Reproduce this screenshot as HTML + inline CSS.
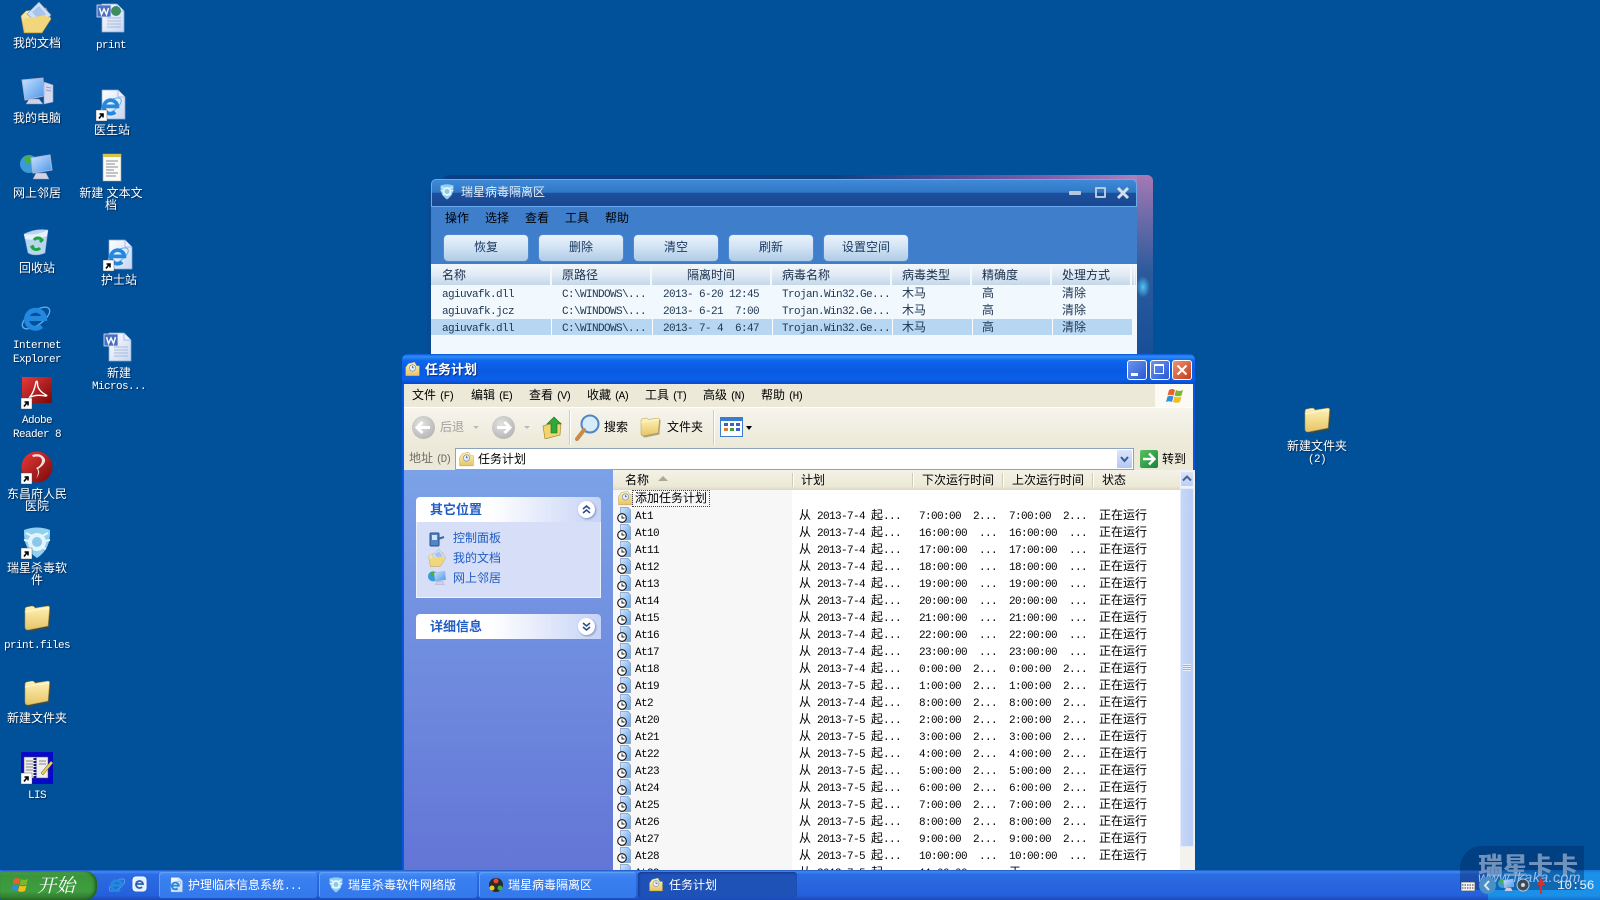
<!DOCTYPE html>
<html lang="zh"><head><meta charset="utf-8"><title>任务计划</title>
<style>
html,body{margin:0;padding:0;width:1600px;height:900px;overflow:hidden;background:#00509a}
body{position:relative;font-family:"Liberation Sans","WenQuanYi Zen Hei","Noto Sans CJK SC",sans-serif;font-size:12px;line-height:16px;color:#000}
div,span,svg{position:absolute}
tt{position:static;font-family:"Liberation Mono",monospace;font-size:11px;letter-spacing:-.6px}
.t{white-space:nowrap}
.lb{width:90px;text-align:center;color:#fff;line-height:12px;text-shadow:1px 1px 1px #00264f;white-space:nowrap}
.ic{width:32px;height:32px;overflow:visible}
.btn{top:235px;width:84px;height:26px;border-radius:4px;background:linear-gradient(#eaf3fb,#d3e4f4 45%,#afcbe6);box-shadow:0 0 1px #9cc2ea;text-align:center;line-height:25px;color:#16375f}
.hd{top:264px;height:21px;line-height:22px;background:linear-gradient(#f3f7fb,#e1ebf5 50%,#c4d7ea);border-right:2px solid #f3f8fd;color:#1a2f4c}
.rw{position:absolute;left:431px;width:701px;height:16px;line-height:16px;color:#1d3550}
.rw span{white-space:nowrap;top:0}
.menu span{top:0;white-space:nowrap}
.menu tt,.pk tt{margin-left:3px;letter-spacing:-2px}
.r{left:0;width:567px;height:16px;white-space:nowrap}
.r svg{left:4px;top:0;width:16px;height:18px}
.r span{top:0}
.a{left:22px}.b{left:186px}.g{margin:0 6px}.n{left:306px}.d{left:360px}.e{left:366px}.l{left:396px}.f{left:450px}.h{left:456px}.z{left:486px}
.tb{top:872px;height:26px;border-radius:3px;background:linear-gradient(#4a8ef5,#3a80f0 20%,#3479ec);color:#fff;line-height:26px;white-space:nowrap;box-shadow:inset 1px 1px 0 #5f9ff8}
.sep{width:1px;background:#cfccb8;box-shadow:1px 0 0 #fff}
.task{left:453px;color:#215dc6;white-space:nowrap}
.grp{left:416px;width:185px;border-radius:4px 4px 0 0;background:linear-gradient(90deg,#fff,#fff 40%,#c6d3f7);height:25px}
.gt{left:14px;top:5px;font-weight:bold;font-size:13px;color:#215dc6;white-space:nowrap}
.chev{left:162px;top:4px;width:17px;height:17px;border-radius:50%;background:#fff;box-shadow:1px 1px 2px #7f8fc0}
</style></head><body>

<svg width="0" height="0" style="left:0;top:0">
<defs>
<linearGradient id="gf" x1="0" y1="0" x2="0" y2="1"><stop offset="0" stop-color="#fff3b8"/><stop offset="1" stop-color="#e6c465"/></linearGradient>
<linearGradient id="gs" x1="0" y1="0" x2="1" y2="1"><stop offset="0" stop-color="#c8e4ff"/><stop offset="1" stop-color="#4c94e8"/></linearGradient>
<linearGradient id="gp" x1="0" y1="0" x2="1" y2="1"><stop offset="0" stop-color="#fff"/><stop offset="1" stop-color="#c6d6f2"/></linearGradient>
<linearGradient id="gr" x1="0" y1="0" x2="1" y2="1"><stop offset="0" stop-color="#e83a3a"/><stop offset="1" stop-color="#7a0808"/></linearGradient>
<g id="folder"><path d="M5 9Q5 6 7 6L12 5Q14 5 15 7L27 5Q29 5 28.500 8L27 25 8 29Q5 29 5 26Z" fill="#5c4a18" opacity=".45" transform="translate(1.500 1)"/><path d="M4 8Q4 5 6 5L11 4Q13 4 14 6L27 4Q29 4 28.500 7L27 24 7 28Q4 28 4 25Z" fill="url(#gf)" stroke="#b0913f" stroke-width=".6"/><path d="M4 10 14 8 28 6" fill="none" stroke="#fff8d0" stroke-width="1"/></g>
<g id="docs"><path d="M1 14 6 9 26 6 31 17 22 31 4 31Z" fill="url(#gf)" stroke="#b0913f" stroke-width=".6"/><path d="M7 12 19 0 31 13 20 23Z" fill="#cfe0f8" stroke="#7f9bc8" stroke-width=".6"/><path d="M12 10 19 4 26 12 19 18Z" fill="#a8c4ea"/><path d="M4 17 25 13 30 17 22 30 5 30Z" fill="#f2d67c"/></g>
<g id="pc"><path d="M2 3 23 1 24 19 5 23Z" fill="url(#gs)" stroke="#aab8d8"/><path d="M9 22h10l4 5H6Z" fill="#d2d2e6" stroke="#8888a8" stroke-width=".5"/><path d="M24 5 33 8V25L24 27Z" fill="#d4daee" stroke="#8d9ec8" stroke-width=".6"/><path d="M26 10 31 11M26 13 31 14" stroke="#8d9ec8"/></g>
<g id="net"><circle cx="9" cy="13" r="9" fill="#3c9ad8"/><path d="M4 7q5-4 9 0l-3 5-4 1Z" fill="#4cae3c"/><path d="M11 7 30 4 32 19 13 22Z" fill="url(#gs)" stroke="#aab8d8"/><path d="M16 22h10l3 6H13Z" fill="#d2d2e6" stroke="#9090ac" stroke-width=".5"/></g>
<g id="bin"><path d="M4 8Q16 2 28 4L25 27Q15 31 8 27Z" fill="#b8d6f0" stroke="#7ea2cc" stroke-width=".6"/><path d="M4 8Q16 10 28 4L27 10Q15 15 5 13Z" fill="#e6f2fb"/><path d="M14 14a5 5 0 0 1 8 0l-2 2M20 22a5 5 0 0 1-8-1l2-1" fill="none" stroke="#1fa63c" stroke-width="3"/></g>
<g id="ie"><ellipse cx="16" cy="16" rx="16" ry="7" transform="rotate(-35 16 16)" fill="none" stroke="#63b0ea" stroke-width="1.300"/><path d="M7 16.500h17.500a9 9 0 1 0-3 7.500" fill="none" stroke="#2388de" stroke-width="5"/></g>
<g id="sc"><rect x="0" y="21" width="11" height="11" fill="#fff" stroke="#444" stroke-width=".4"/><path d="M3 29.500l3.500-4.500M3.500 25h3.500v3.500" fill="none" stroke="#000" stroke-width="1.600"/></g>
<g id="ad"><rect x="1" y="0" width="30" height="26" fill="url(#gr)"/><path d="M8 21Q13 16 15 5Q16 3 16.500 6Q16 13 25 18Q27 19 24 19Q14 17 8 21Z" fill="none" stroke="#fff" stroke-width="1.400"/></g>
<g id="hos"><circle cx="16" cy="15" r="15.500" fill="url(#gr)"/><path d="M12 5Q21 3 21 9Q20 14 15 16Q19 19 15 27Q20 20 17 17Q25 12 24 7Q20 0 11 3Z" fill="#f4dede"/></g>
<g id="lion"><path d="M3 3Q16-2 29 3Q30 22 16 31Q2 22 3 3Z" fill="#8fd0f0"/><circle cx="16" cy="15" r="9" fill="#e2f4fc"/><circle cx="16" cy="15" r="5" fill="#8cc8ea"/><path d="M5 6 11 9M27 6 21 9M3 13 8 14M29 13 24 14M7 22 11 20M25 22 21 20" stroke="#e8f6fd" stroke-width="2"/></g>
<g id="lis"><rect width="32" height="32" fill="#0808c8"/><path d="M3 5H15V26H3ZM15 5H27V26H15Z" fill="#eee" stroke="#555" stroke-width=".5"/><path d="M14 3v25" stroke="#111680" stroke-width="3" stroke-dasharray="2 1"/><path d="M5 9h7M5 12h7M5 15h7M5 18h7M18 9h7M18 12h7" stroke="#888"/><path d="M20 21 30 9 32 11 22 23Z" fill="#f0d040" stroke="#444" stroke-width=".5"/></g>
<g id="word"><path d="M6 2H21L28 9V30H6Z" fill="url(#gp)" stroke="#8ea8d0" stroke-width=".7"/><path d="M21 2V9H28" fill="#eef" stroke="#8ea8d0" stroke-width=".7"/><path d="M11 16h14M11 19h14M11 22h14M11 25h14" stroke="#a6bbdc"/><rect x="1" y="3" width="14" height="12" fill="#4a6ec0" stroke="#dfe8fa" stroke-width=".8"/><path d="M3.500 6 5.500 12.500 8 7 10.500 12.500 12.500 6" fill="none" stroke="#fff" stroke-width="1.400"/></g>
<g id="wordw"><use href="#word"/><circle cx="20" cy="9" r="5" fill="#3c8e60"/></g>
<g id="iedoc"><path d="M6 1H22L29 8V30H6Z" fill="url(#gp)" stroke="#8ea8d0" stroke-width=".7"/><path d="M22 1V8H29" fill="#eef" stroke="#8ea8d0" stroke-width=".7"/><g transform="translate(3 5) scale(.75)"><use href="#ie"/></g></g>
<g id="note"><path d="M8 3H26V30H8Z" fill="#fbfbf3" stroke="#9aa" stroke-width=".6"/><path d="M8 3H26V6H8Z" fill="#d6c44c"/><path d="M11 10h12M11 13h9M11 16h12M11 19h8M11 22h12M11 25h10" stroke="#668" stroke-width=".8"/></g>
<g id="task"><path d="M3 12 8 5 20 2 24 9H29V28H3Z" fill="url(#gf)" stroke="#a58a3a" stroke-width=".7"/><circle cx="16" cy="13" r="6" fill="#e4eefb" stroke="#5578ae"/><path d="M16 9v4h3" stroke="#223" fill="none"/></g>
<g id="rowi"><path d="M3.500.5H11L13.500 3V15.500H3.500Z" fill="url(#gs)" stroke="#6d87b4" stroke-width=".7" opacity=".85"/><circle cx="5" cy="11" r="4.300" fill="#fff" stroke="#111" stroke-width="1.100"/><path d="M5 8.500V11H7.500" stroke="#111" fill="none" stroke-width=".9"/></g>
</defs>
</svg>

<!-- desktop icons -->
<svg class="ic" viewBox="0 0 32 32" style="left:20px;top:2px"><use href="#docs"/></svg>
<div class="lb t" style="left:-8px;top:37px">我的文档</div>
<svg class="ic" viewBox="0 0 32 32" style="left:20px;top:77px"><use href="#pc"/></svg>
<div class="lb t" style="left:-8px;top:112px">我的电脑</div>
<svg class="ic" viewBox="0 0 32 32" style="left:20px;top:151px"><use href="#net"/></svg>
<div class="lb t" style="left:-8px;top:187px">网上邻居</div>
<svg class="ic" viewBox="0 0 32 32" style="left:20px;top:226px"><use href="#bin"/></svg>
<div class="lb t" style="left:-8px;top:262px">回收站</div>
<svg class="ic" viewBox="0 0 32 32" style="left:20px;top:302px"><use href="#ie"/></svg>
<div class="lb t" style="left:-8px;top:338px"><tt>Internet<br>Explorer</tt></div>
<svg class="ic" viewBox="0 0 32 32" style="left:21px;top:377px"><use href="#ad"/><use href="#sc"/></svg>
<div class="lb t" style="left:-8px;top:413px"><tt>Adobe<br>Reader 8</tt></div>
<svg class="ic" viewBox="0 0 32 32" style="left:21px;top:452px"><use href="#hos"/><use href="#sc"/></svg>
<div class="lb t" style="left:-8px;top:488px">东昌府人民<br>医院</div>
<svg class="ic" viewBox="0 0 32 32" style="left:21px;top:527px"><use href="#lion"/><use href="#sc"/></svg>
<div class="lb t" style="left:-8px;top:562px">瑞星杀毒软<br>件</div>
<svg class="ic" viewBox="0 0 32 32" style="left:21px;top:602px"><use href="#folder"/></svg>
<div class="lb t" style="left:-8px;top:638px"><tt>print.files</tt></div>
<svg class="ic" viewBox="0 0 32 32" style="left:21px;top:677px"><use href="#folder"/></svg>
<div class="lb t" style="left:-8px;top:712px">新建文件夹</div>
<svg class="ic" viewBox="0 0 32 32" style="left:21px;top:752px"><use href="#lis"/><use href="#sc"/></svg>
<div class="lb t" style="left:-8px;top:788px"><tt>LIS</tt></div>

<svg class="ic" viewBox="0 0 32 32" style="left:96px;top:2px"><use href="#wordw"/></svg>
<div class="lb t" style="left:66px;top:38px"><tt>print</tt></div>
<svg class="ic" viewBox="0 0 32 32" style="left:96px;top:89px"><use href="#iedoc"/><use href="#sc"/></svg>
<div class="lb t" style="left:67px;top:124px">医生站</div>
<svg class="ic" viewBox="0 0 32 32" style="left:95px;top:151px"><use href="#note"/></svg>
<div class="lb t" style="left:66px;top:187px">新建 文本文<br>档</div>
<svg class="ic" viewBox="0 0 32 32" style="left:103px;top:239px"><use href="#iedoc"/><use href="#sc"/></svg>
<div class="lb t" style="left:74px;top:274px">护士站</div>
<svg class="ic" viewBox="0 0 32 32" style="left:103px;top:331px"><use href="#word"/></svg>
<div class="lb t" style="left:74px;top:367px">新建<br><tt>Micros...</tt></div>

<svg class="ic" viewBox="0 0 32 32" style="left:1301px;top:404px"><use href="#folder"/></svg>
<div class="lb t" style="left:1272px;top:440px">新建文件夹<br><tt>(2)</tt></div>

<!-- Rising quarantine window -->
<div style="left:443px;top:175px;width:710px;height:180px;border-radius:6px 6px 0 0;background:linear-gradient(90deg,#0b3f85,#0d3f85 55%,#7e5ea8 85%,#b487c0)"></div>
<div style="left:427px;top:190px;width:6px;height:165px;background:#0a4a92"></div>
<div style="left:1137px;top:175px;width:16px;height:180px;border-radius:0 6px 0 0;background:linear-gradient(#a679b4,#6a6aa8 25%,#2a5a9c 55%,#174f98)"></div>
<div style="left:1136px;top:276px;width:14px;height:22px;border-radius:50%;background:radial-gradient(#4fc4f5,rgba(60,150,230,0) 70%)"></div>
<div style="left:431px;top:179px;width:706px;height:28px;box-sizing:border-box;border:1px solid #6aaaf0;border-radius:5px 5px 0 0;background:linear-gradient(#3f8ad8,#2f78c6 48%,#1c4f9c 50%,#1a4791)"></div>
<svg viewBox="0 0 32 32" style="left:439px;top:184px;width:16px;height:16px"><use href="#lion"/></svg>
<div class="t" style="left:461px;top:184px;color:#e4eef8">瑞星病毒隔离区</div>
<div style="left:1069px;top:191px;width:12px;height:4px;background:#b8c8dc;border-radius:1px"></div>
<div style="left:1095px;top:187px;width:7px;height:7px;border:2px solid #b8c8dc;border-radius:1px"></div>
<svg width="14" height="14" viewBox="0 0 14 14" style="left:1116px;top:186px"><path d="M2 2 12 12M12 2 2 12" stroke="#d3dfeb" stroke-width="3"/></svg>

<div style="left:431px;top:207px;width:706px;height:57px;background:#3f7ecb"></div>
<div class="menu" style="left:0;top:210px">
<span style="left:445px">操作</span><span style="left:485px">选择</span><span style="left:525px">查看</span><span style="left:565px">工具</span><span style="left:605px">帮助</span>
</div>
<div class="btn" style="left:444px">恢复</div>
<div class="btn" style="left:539px">删除</div>
<div class="btn" style="left:634px">清空</div>
<div class="btn" style="left:729px">刷新</div>
<div class="btn" style="left:824px">设置空间</div>

<div style="left:431px;top:264px;width:706px;height:90px;background:#f2f9fe"></div>
<div class="hd" style="left:431px;width:119px"><span style="left:11px">名称</span></div>
<div class="hd" style="left:552px;width:98px"><span style="left:10px">原路径</span></div>
<div class="hd" style="left:652px;width:118px;text-align:center">隔离时间</div>
<div class="hd" style="left:772px;width:118px"><span style="left:10px">病毒名称</span></div>
<div class="hd" style="left:892px;width:78px"><span style="left:10px">病毒类型</span></div>
<div class="hd" style="left:972px;width:78px"><span style="left:10px">精确度</span></div>
<div class="hd" style="left:1052px;width:78px"><span style="left:10px">处理方式</span></div>
<div class="hd" style="left:1132px;width:2px;border-right:0"></div>
<div class="hd" style="left:1135px;width:1px;border-right:0"></div>

<div class="rw" style="top:285px"><span style="left:11px"><tt>agiuvafk.dll</tt></span><span style="left:131px"><tt>C:\WINDOWS\...</tt></span><span style="left:232px"><tt>2013- 6-20 12:45</tt></span><span style="left:351px"><tt>Trojan.Win32.Ge...</tt></span><span style="left:471px">木马</span><span style="left:551px">高</span><span style="left:631px">清除</span></div>
<div class="rw" style="top:302px"><span style="left:11px"><tt>agiuvafk.jcz</tt></span><span style="left:131px"><tt>C:\WINDOWS\...</tt></span><span style="left:232px"><tt>2013- 6-21&nbsp; 7:00</tt></span><span style="left:351px"><tt>Trojan.Win32.Ge...</tt></span><span style="left:471px">木马</span><span style="left:551px">高</span><span style="left:631px">清除</span></div>
<div class="rw" style="top:319px;background:linear-gradient(90deg,#b6d6f2 120px,#fff 120px,#fff 121px,#b6d6f2 121px,#b6d6f2 221px,#fff 221px,#fff 222px,#b6d6f2 222px,#b6d6f2 341px,#fff 341px,#fff 342px,#b6d6f2 342px,#b6d6f2 461px,#fff 461px,#fff 462px,#b6d6f2 462px,#b6d6f2 541px,#fff 541px,#fff 542px,#b6d6f2 542px,#b6d6f2 621px,#fff 621px,#fff 622px,#b6d6f2 622px)"><span style="left:11px"><tt>agiuvafk.dll</tt></span><span style="left:131px"><tt>C:\WINDOWS\...</tt></span><span style="left:232px"><tt>2013- 7- 4&nbsp; 6:47</tt></span><span style="left:351px"><tt>Trojan.Win32.Ge...</tt></span><span style="left:471px">木马</span><span style="left:551px">高</span><span style="left:631px">清除</span></div>

<!-- Task window -->
<div style="left:402px;top:354px;width:793px;height:520px;background:#0a55e0;border-radius:6px 6px 0 0"></div>
<div style="left:402px;top:354px;width:793px;height:30px;border-radius:6px 6px 0 0;background:linear-gradient(#0a58d8,#2f8cf8 8%,#0f66ee 22%,#0a5ae2 55%,#0a5fea 85%,#0a48c8)"></div>
<svg viewBox="0 0 32 32" style="left:404px;top:361px;width:17px;height:17px"><use href="#task"/></svg>
<div class="t" style="left:425px;top:362px;color:#fff;font-weight:bold;font-size:13px;text-shadow:1px 1px 1px #0b2f88">任务计划</div>
<div style="left:1127px;top:360px;width:20px;height:20px;box-sizing:border-box;border:1px solid #fff;border-radius:3px;background:linear-gradient(135deg,#6a95f0,#2a58d0)"><span style="left:3px;top:12px;width:7px;height:3px;background:#fff"></span></div>
<div style="left:1150px;top:360px;width:20px;height:20px;box-sizing:border-box;border:1px solid #fff;border-radius:3px;background:linear-gradient(135deg,#6a95f0,#2a58d0)"><span style="left:3px;top:3px;width:10px;height:10px;border:1px solid #fff;border-top-width:2px;box-sizing:border-box"></span></div>
<div style="left:1172px;top:360px;width:20px;height:20px;box-sizing:border-box;border:1px solid #fff;border-radius:3px;background:linear-gradient(135deg,#ea9478,#c43c14)"><svg width="18" height="18" viewBox="0 0 18 18" style="left:0;top:0"><path d="M4.500 4.500 13.500 13.500M13.500 4.500 4.500 13.500" stroke="#fff" stroke-width="2"/></svg></div>

<div style="left:404px;top:384px;width:789px;height:23px;background:#ece9d8"></div>
<div class="menu" style="left:0;top:387px">
<span style="left:412px">文件<tt>(F)</tt></span><span style="left:471px">编辑<tt>(E)</tt></span><span style="left:529px">查看<tt>(V)</tt></span><span style="left:587px">收藏<tt>(A)</tt></span><span style="left:645px">工具<tt>(T)</tt></span><span style="left:703px">高级<tt>(N)</tt></span><span style="left:761px">帮助<tt>(H)</tt></span>
</div>
<div style="left:1155px;top:384px;width:38px;height:23px;background:#fbfaf5"></div>
<svg width="20" height="20" viewBox="0 0 20 20" style="left:1166px;top:386px"><path d="M3 4Q6 2 9 4L7.500 9.500Q4.500 8 1.500 9.500Z" fill="#e8612c"/><path d="M10 4Q13 6 17 4L15.500 9.500Q12 11 8.500 9.500Z" fill="#7cb82f"/><path d="M1.500 10.500Q4.500 9 7.500 10.500L6 16Q3 14.500 0 16Z" fill="#2f8fd8"/><path d="M8.500 10.500Q12 12 15.500 10.500L14 16Q10.500 17.500 7 16Z" fill="#f5be1f"/></svg>

<div style="left:404px;top:407px;width:789px;height:40px;background:linear-gradient(#f6f4ec,#ece9d8);border-top:1px solid #fff;box-sizing:border-box"></div>
<div style="left:412px;top:416px;width:23px;height:23px;border-radius:50%;background:radial-gradient(circle at 40% 35%,#e2e2e2,#a8a8a8)"></div>
<svg width="23" height="23" viewBox="0 0 23 23" style="left:412px;top:416px"><path d="M5 11.500H18M10.500 6 5 11.500 10.500 17" fill="none" stroke="#fff" stroke-width="3"/></svg>
<div class="t" style="left:440px;top:419px;color:#a0a0a0">后退</div>
<div style="left:473px;top:426px;border:3px solid transparent;border-top:3px solid #bbb"></div>
<div style="left:492px;top:416px;width:23px;height:23px;border-radius:50%;background:radial-gradient(circle at 40% 35%,#e2e2e2,#a8a8a8)"></div>
<svg width="23" height="23" viewBox="0 0 23 23" style="left:492px;top:416px"><path d="M5 11.500H18M12.500 6 18 11.500 12.500 17" fill="none" stroke="#fff" stroke-width="3"/></svg>
<div style="left:524px;top:426px;border:3px solid transparent;border-top:3px solid #bbb"></div>
<svg width="24" height="24" viewBox="0 0 24 24" style="left:541px;top:415px"><path d="M2 11 8 9 20 8 19 20 4 24Z" fill="#f0d56f" stroke="#a58a3a" stroke-width=".7"/><path d="M13 2 20 9H16V18H10V9H6Z" fill="#2ea838" stroke="#14701e" stroke-width=".6"/></svg>
<div class="sep" style="left:569px;top:410px;height:35px"></div>
<svg width="26" height="28" viewBox="0 0 26 28" style="left:575px;top:414px"><circle cx="15" cy="10" r="8.500" fill="#d6ecfa" stroke="#4f86c6" stroke-width="2"/><path d="M9 16 2 25" stroke="#c88a48" stroke-width="4" stroke-linecap="round"/></svg>
<div class="t" style="left:604px;top:419px">搜索</div>
<svg viewBox="0 0 32 32" style="left:638px;top:415px;width:24px;height:24px"><use href="#folder"/></svg>
<div class="t" style="left:667px;top:419px">文件夹</div>
<div class="sep" style="left:713px;top:410px;height:35px"></div>
<svg width="24" height="22" viewBox="0 0 24 22" style="left:720px;top:417px"><rect x=".5" y=".5" width="22" height="19" fill="#fdfdff" stroke="#3a7cd0"/><rect x="1" y="1" width="21" height="3" fill="#3a7cd0"/><path d="M4 6h4v3H4ZM10 6h4v3h-4ZM16 6h4v3h-4Z" fill="#3a60c0"/><path d="M4 11h4v3H4Z" fill="#d88030"/><path d="M10 11h4v3h-4Z" fill="#40a040"/><path d="M16 11h4v3h-4Z" fill="#3a60c0"/></svg>
<div style="left:746px;top:426px;border:3px solid transparent;border-top:4px solid #000"></div>

<div style="left:404px;top:447px;width:789px;height:23px;background:#ece9d8"></div>
<div class="t pk" style="left:409px;top:450px;color:#6f6f68">地址<tt>(D)</tt></div>
<div style="left:455px;top:448px;width:679px;height:22px;box-sizing:border-box;background:#fff;border:1px solid #8ea4bc"></div>
<svg viewBox="0 0 32 32" style="left:458px;top:451px;width:17px;height:17px"><use href="#task"/></svg>
<div class="t" style="left:478px;top:451px">任务计划</div>
<div style="left:1117px;top:450px;width:15px;height:18px;background:linear-gradient(#dce6fb,#b4c6f2);border-radius:1px"></div>
<svg width="15" height="18" viewBox="0 0 15 18" style="left:1117px;top:450px"><path d="M4 7 7.500 11 11 7" fill="none" stroke="#3c5a96" stroke-width="2"/></svg>
<div style="left:1140px;top:450px;width:18px;height:18px;border-radius:2px;background:linear-gradient(135deg,#5cc060,#16843a)"></div>
<svg width="18" height="18" viewBox="0 0 18 18" style="left:1140px;top:450px"><path d="M3 9H14M9 3.500 14.500 9 9 14.500" fill="none" stroke="#fff" stroke-width="2.400"/></svg>
<div class="t" style="left:1162px;top:451px">转到</div>

<!-- left pane -->
<div style="left:404px;top:470px;width:209px;height:400px;background:linear-gradient(#7ba2e7,#6375d6)"></div>
<div class="grp" style="top:497px"><span class="gt">其它位置</span><span class="chev"><svg width="17" height="17" viewBox="0 0 17 17" style="left:0;top:0"><path d="M5 8 8.500 5 12 8M5 12 8.500 9 12 12" fill="none" stroke="#2a4a8a" stroke-width="1.500"/></svg></span></div>
<div style="left:416px;top:522px;width:183px;height:75px;background:#d6dff7;border:1px solid #eef2fd;border-top:0"></div>
<svg width="18" height="18" viewBox="0 0 18 18" style="left:428px;top:530px"><rect x="2" y="3" width="9" height="13" rx="1" fill="#4f86c6" stroke="#274f88"/><rect x="4" y="5" width="5" height="5" fill="#cfe4f8"/><path d="M10 9 16 7" stroke="#3a6aa6" stroke-width="2"/></svg>
<div class="task" style="top:530px">控制面板</div>
<svg viewBox="0 0 32 32" style="left:428px;top:549px;width:18px;height:18px"><use href="#docs"/></svg>
<div class="task" style="top:550px">我的文档</div>
<svg viewBox="0 0 32 32" style="left:428px;top:569px;width:18px;height:18px"><use href="#net"/></svg>
<div class="task" style="top:570px">网上邻居</div>
<div class="grp" style="top:614px"><span class="gt">详细信息</span><span class="chev"><svg width="17" height="17" viewBox="0 0 17 17" style="left:0;top:0"><path d="M5 5 8.500 8 12 5M5 9 8.500 12 12 9" fill="none" stroke="#2a4a8a" stroke-width="1.500"/></svg></span></div>

<!-- list -->
<div style="left:613px;top:470px;width:582px;height:20px;background:linear-gradient(#f4f2e8,#ece9d8 80%,#dcd8c4)"></div>
<div class="t" style="left:625px;top:472px">名称</div>
<div style="left:658px;top:476px;border:5px solid transparent;border-top:0;border-bottom:5px solid #aca899"></div>
<div class="sep" style="left:792px;top:473px;height:14px"></div>
<div class="t" style="left:801px;top:472px">计划</div>
<div class="sep" style="left:912px;top:473px;height:14px"></div>
<div class="t" style="left:922px;top:472px">下次运行时间</div>
<div class="sep" style="left:1002px;top:473px;height:14px"></div>
<div class="t" style="left:1012px;top:472px">上次运行时间</div>
<div class="sep" style="left:1092px;top:473px;height:14px"></div>
<div class="t" style="left:1102px;top:472px">状态</div>

<div style="left:613px;top:490px;width:567px;height:380px;background:#fff;overflow:hidden">
<div style="left:0;top:0;width:179px;height:380px;background:#f7f7f7"></div>
<svg viewBox="0 0 32 32" style="left:4px;top:0;width:17px;height:17px"><use href="#task"/></svg>
<div class="t" style="left:20px;top:1px;height:15px;line-height:15px;padding:0 2px;outline:1px dotted #444">添加任务计划</div>

<div class="r" style="top:17px"><svg viewBox="0 0 16 18"><use href="#rowi"/></svg><span class="a"><tt>At1</tt></span><span class="b">从<tt class="g">2013-7-4</tt>起<tt>...</tt></span><span class="n"><tt>7:00:00</tt></span><span class="d"><tt>2...</tt></span><span class="l"><tt>7:00:00</tt></span><span class="f"><tt>2...</tt></span><span class="z">正在运行</span></div>
<div class="r" style="top:34px"><svg viewBox="0 0 16 18"><use href="#rowi"/></svg><span class="a"><tt>At10</tt></span><span class="b">从<tt class="g">2013-7-4</tt>起<tt>...</tt></span><span class="n"><tt>16:00:00</tt></span><span class="e"><tt>...</tt></span><span class="l"><tt>16:00:00</tt></span><span class="h"><tt>...</tt></span><span class="z">正在运行</span></div>
<div class="r" style="top:51px"><svg viewBox="0 0 16 18"><use href="#rowi"/></svg><span class="a"><tt>At11</tt></span><span class="b">从<tt class="g">2013-7-4</tt>起<tt>...</tt></span><span class="n"><tt>17:00:00</tt></span><span class="e"><tt>...</tt></span><span class="l"><tt>17:00:00</tt></span><span class="h"><tt>...</tt></span><span class="z">正在运行</span></div>
<div class="r" style="top:68px"><svg viewBox="0 0 16 18"><use href="#rowi"/></svg><span class="a"><tt>At12</tt></span><span class="b">从<tt class="g">2013-7-4</tt>起<tt>...</tt></span><span class="n"><tt>18:00:00</tt></span><span class="e"><tt>...</tt></span><span class="l"><tt>18:00:00</tt></span><span class="h"><tt>...</tt></span><span class="z">正在运行</span></div>
<div class="r" style="top:85px"><svg viewBox="0 0 16 18"><use href="#rowi"/></svg><span class="a"><tt>At13</tt></span><span class="b">从<tt class="g">2013-7-4</tt>起<tt>...</tt></span><span class="n"><tt>19:00:00</tt></span><span class="e"><tt>...</tt></span><span class="l"><tt>19:00:00</tt></span><span class="h"><tt>...</tt></span><span class="z">正在运行</span></div>
<div class="r" style="top:102px"><svg viewBox="0 0 16 18"><use href="#rowi"/></svg><span class="a"><tt>At14</tt></span><span class="b">从<tt class="g">2013-7-4</tt>起<tt>...</tt></span><span class="n"><tt>20:00:00</tt></span><span class="e"><tt>...</tt></span><span class="l"><tt>20:00:00</tt></span><span class="h"><tt>...</tt></span><span class="z">正在运行</span></div>
<div class="r" style="top:119px"><svg viewBox="0 0 16 18"><use href="#rowi"/></svg><span class="a"><tt>At15</tt></span><span class="b">从<tt class="g">2013-7-4</tt>起<tt>...</tt></span><span class="n"><tt>21:00:00</tt></span><span class="e"><tt>...</tt></span><span class="l"><tt>21:00:00</tt></span><span class="h"><tt>...</tt></span><span class="z">正在运行</span></div>
<div class="r" style="top:136px"><svg viewBox="0 0 16 18"><use href="#rowi"/></svg><span class="a"><tt>At16</tt></span><span class="b">从<tt class="g">2013-7-4</tt>起<tt>...</tt></span><span class="n"><tt>22:00:00</tt></span><span class="e"><tt>...</tt></span><span class="l"><tt>22:00:00</tt></span><span class="h"><tt>...</tt></span><span class="z">正在运行</span></div>
<div class="r" style="top:153px"><svg viewBox="0 0 16 18"><use href="#rowi"/></svg><span class="a"><tt>At17</tt></span><span class="b">从<tt class="g">2013-7-4</tt>起<tt>...</tt></span><span class="n"><tt>23:00:00</tt></span><span class="e"><tt>...</tt></span><span class="l"><tt>23:00:00</tt></span><span class="h"><tt>...</tt></span><span class="z">正在运行</span></div>
<div class="r" style="top:170px"><svg viewBox="0 0 16 18"><use href="#rowi"/></svg><span class="a"><tt>At18</tt></span><span class="b">从<tt class="g">2013-7-4</tt>起<tt>...</tt></span><span class="n"><tt>0:00:00</tt></span><span class="d"><tt>2...</tt></span><span class="l"><tt>0:00:00</tt></span><span class="f"><tt>2...</tt></span><span class="z">正在运行</span></div>
<div class="r" style="top:187px"><svg viewBox="0 0 16 18"><use href="#rowi"/></svg><span class="a"><tt>At19</tt></span><span class="b">从<tt class="g">2013-7-5</tt>起<tt>...</tt></span><span class="n"><tt>1:00:00</tt></span><span class="d"><tt>2...</tt></span><span class="l"><tt>1:00:00</tt></span><span class="f"><tt>2...</tt></span><span class="z">正在运行</span></div>
<div class="r" style="top:204px"><svg viewBox="0 0 16 18"><use href="#rowi"/></svg><span class="a"><tt>At2</tt></span><span class="b">从<tt class="g">2013-7-4</tt>起<tt>...</tt></span><span class="n"><tt>8:00:00</tt></span><span class="d"><tt>2...</tt></span><span class="l"><tt>8:00:00</tt></span><span class="f"><tt>2...</tt></span><span class="z">正在运行</span></div>
<div class="r" style="top:221px"><svg viewBox="0 0 16 18"><use href="#rowi"/></svg><span class="a"><tt>At20</tt></span><span class="b">从<tt class="g">2013-7-5</tt>起<tt>...</tt></span><span class="n"><tt>2:00:00</tt></span><span class="d"><tt>2...</tt></span><span class="l"><tt>2:00:00</tt></span><span class="f"><tt>2...</tt></span><span class="z">正在运行</span></div>
<div class="r" style="top:238px"><svg viewBox="0 0 16 18"><use href="#rowi"/></svg><span class="a"><tt>At21</tt></span><span class="b">从<tt class="g">2013-7-5</tt>起<tt>...</tt></span><span class="n"><tt>3:00:00</tt></span><span class="d"><tt>2...</tt></span><span class="l"><tt>3:00:00</tt></span><span class="f"><tt>2...</tt></span><span class="z">正在运行</span></div>
<div class="r" style="top:255px"><svg viewBox="0 0 16 18"><use href="#rowi"/></svg><span class="a"><tt>At22</tt></span><span class="b">从<tt class="g">2013-7-5</tt>起<tt>...</tt></span><span class="n"><tt>4:00:00</tt></span><span class="d"><tt>2...</tt></span><span class="l"><tt>4:00:00</tt></span><span class="f"><tt>2...</tt></span><span class="z">正在运行</span></div>
<div class="r" style="top:272px"><svg viewBox="0 0 16 18"><use href="#rowi"/></svg><span class="a"><tt>At23</tt></span><span class="b">从<tt class="g">2013-7-5</tt>起<tt>...</tt></span><span class="n"><tt>5:00:00</tt></span><span class="d"><tt>2...</tt></span><span class="l"><tt>5:00:00</tt></span><span class="f"><tt>2...</tt></span><span class="z">正在运行</span></div>
<div class="r" style="top:289px"><svg viewBox="0 0 16 18"><use href="#rowi"/></svg><span class="a"><tt>At24</tt></span><span class="b">从<tt class="g">2013-7-5</tt>起<tt>...</tt></span><span class="n"><tt>6:00:00</tt></span><span class="d"><tt>2...</tt></span><span class="l"><tt>6:00:00</tt></span><span class="f"><tt>2...</tt></span><span class="z">正在运行</span></div>
<div class="r" style="top:306px"><svg viewBox="0 0 16 18"><use href="#rowi"/></svg><span class="a"><tt>At25</tt></span><span class="b">从<tt class="g">2013-7-5</tt>起<tt>...</tt></span><span class="n"><tt>7:00:00</tt></span><span class="d"><tt>2...</tt></span><span class="l"><tt>7:00:00</tt></span><span class="f"><tt>2...</tt></span><span class="z">正在运行</span></div>
<div class="r" style="top:323px"><svg viewBox="0 0 16 18"><use href="#rowi"/></svg><span class="a"><tt>At26</tt></span><span class="b">从<tt class="g">2013-7-5</tt>起<tt>...</tt></span><span class="n"><tt>8:00:00</tt></span><span class="d"><tt>2...</tt></span><span class="l"><tt>8:00:00</tt></span><span class="f"><tt>2...</tt></span><span class="z">正在运行</span></div>
<div class="r" style="top:340px"><svg viewBox="0 0 16 18"><use href="#rowi"/></svg><span class="a"><tt>At27</tt></span><span class="b">从<tt class="g">2013-7-5</tt>起<tt>...</tt></span><span class="n"><tt>9:00:00</tt></span><span class="d"><tt>2...</tt></span><span class="l"><tt>9:00:00</tt></span><span class="f"><tt>2...</tt></span><span class="z">正在运行</span></div>
<div class="r" style="top:357px"><svg viewBox="0 0 16 18"><use href="#rowi"/></svg><span class="a"><tt>At28</tt></span><span class="b">从<tt class="g">2013-7-5</tt>起<tt>...</tt></span><span class="n"><tt>10:00:00</tt></span><span class="e"><tt>...</tt></span><span class="l"><tt>10:00:00</tt></span><span class="h"><tt>...</tt></span><span class="z">正在运行</span></div>
<div class="r" style="top:374px"><svg viewBox="0 0 16 18"><use href="#rowi"/></svg><span class="a"><tt>At29</tt></span><span class="b">从<tt class="g">2013-7-5</tt>起<tt>...</tt></span><span class="n"><tt>11:00:00</tt></span><span class="e"><tt>...</tt></span><span class="l">于</span></div>
</div>

<!-- scrollbar -->
<div style="left:1180px;top:470px;width:15px;height:400px;background:#f3f2ed"></div>
<div style="left:1180px;top:471px;width:14px;height:16px;border-radius:2px;background:linear-gradient(#dbe6fb,#b9cdf5);box-shadow:inset 0 0 0 1px #eef3fd"></div>
<svg width="14" height="16" viewBox="0 0 14 16" style="left:1180px;top:471px"><path d="M3 9.500 7 5.500 11 9.500" fill="none" stroke="#4d6185" stroke-width="2"/></svg>
<div style="left:1180px;top:488px;width:14px;height:359px;border-radius:2px;background:linear-gradient(90deg,#c8d8f8,#b8ccf5);box-shadow:inset 0 0 0 1px #e4ecfc"></div>
<div style="left:1183px;top:664px;width:8px;height:7px;background:repeating-linear-gradient(#e6edfc 0 1px,#9db4e4 1px 2px)"></div>

<!-- taskbar -->
<div style="left:0;top:870px;width:1600px;height:30px;background:linear-gradient(#1d54c4,#3d8cf5 6%,#2c6ce2 14%,#2560dc 85%,#1c48b4)"></div>
<div style="left:0;top:871px;width:97px;height:29px;border-radius:3px 12px 12px 3px;background:linear-gradient(#54a854,#3b963b 15%,#3f9c3f 70%,#2a722a);box-shadow:inset -2px 0 3px #1f5a1f"></div>
<svg width="20" height="20" viewBox="0 0 20 20" style="left:11px;top:875px"><path d="M3 4Q6 2 9 4L7.500 9.500Q4.500 8 1.500 9.500Z" fill="#e8612c"/><path d="M10 4Q13 6 17 4L15.500 9.500Q12 11 8.500 9.500Z" fill="#7cb82f"/><path d="M1.500 10.500Q4.500 9 7.500 10.500L6 16Q3 14.500 0 16Z" fill="#2f8fd8"/><path d="M8.500 10.500Q12 12 15.500 10.500L14 16Q10.500 17.500 7 16Z" fill="#f5be1f"/></svg>
<div class="t" style="left:37px;top:872px;color:#fff;font-size:19px;line-height:26px;font-style:italic;font-family:'Noto Serif CJK SC','Noto Sans CJK SC',serif">开始</div>
<svg viewBox="0 0 32 32" style="left:108px;top:876px;width:18px;height:18px"><use href="#ie"/></svg>
<svg width="18" height="18" viewBox="0 0 18 18" style="left:131px;top:875px"><rect x="2" y="2" width="13" height="14" rx="3" fill="#e6effc" stroke="#fff"/><path d="M5 9h7a3.500 3.500 0 1 0-1 3" fill="none" stroke="#2a60b8" stroke-width="1.800"/></svg>

<div class="tb" style="left:159px;width:158px"><svg viewBox="0 0 32 32" style="left:9px;top:5px;width:16px;height:16px"><use href="#iedoc"/></svg><span style="left:29px">护理临床信息系统<tt>...</tt></span></div>
<div class="tb" style="left:319px;width:158px"><svg viewBox="0 0 32 32" style="left:9px;top:5px;width:16px;height:16px"><use href="#lion"/></svg><span style="left:29px">瑞星杀毒软件网络版</span></div>
<div class="tb" style="left:479px;width:157px"><svg width="16" height="16" viewBox="0 0 16 16" style="left:9px;top:5px"><circle cx="8" cy="8" r="7" fill="#2a2a2a"/><circle cx="8" cy="4" r="2.500" fill="#e84c2c"/><circle cx="4" cy="11" r="2.500" fill="#f0c820"/><circle cx="12" cy="11" r="2.500" fill="#3cb03c"/></svg><span style="left:29px">瑞星病毒隔离区</span></div>
<div class="tb" style="left:638px;width:159px;background:#1e52b7;box-shadow:inset 1px 1px 2px #143a8c"><svg viewBox="0 0 32 32" style="left:10px;top:5px;width:16px;height:16px"><use href="#task"/></svg><span style="left:31px">任务计划</span></div>

<div style="left:1488px;top:870px;width:112px;height:30px;background:linear-gradient(#1a74d8,#1b92ea 10%,#1a90e8 85%,#1572d0)"></div>
<div style="left:1460px;top:846px;width:124px;height:44px;border-radius:22px 0 0 0;background:rgba(0,36,90,.38)"></div>
<div class="t" style="left:1478px;top:851px;font-size:24px;line-height:26px;font-weight:bold;color:#7e9dc2;letter-spacing:1px;opacity:.9;text-shadow:1px 0 0 #7e9dc2;font-family:'Noto Sans CJK SC',sans-serif">瑞星卡卡</div>
<div class="t" style="left:1478px;top:869px;font-size:14px;line-height:16px;font-style:italic;color:#9cc0ee;letter-spacing:.5px;font-family:'Liberation Sans',sans-serif">www.ikaka.com</div>
<svg width="14" height="9" viewBox="0 0 14 9" style="left:1461px;top:882px"><rect width="14" height="9" fill="#f4f4f4" stroke="#333" stroke-width=".6"/><path d="M1 3h12M1 6h12" stroke="#333" stroke-dasharray="1.500 1"/></svg>
<div style="left:1479px;top:877px;width:17px;height:17px;border-radius:50%;background:#4a90c8"></div>
<svg width="17" height="17" viewBox="0 0 17 17" style="left:1479px;top:877px"><path d="M10 4 6 8.500 10 13" fill="none" stroke="#dce8f4" stroke-width="2"/></svg>
<svg viewBox="0 0 32 32" style="left:1498px;top:877px;width:16px;height:16px"><use href="#net"/></svg>
<svg width="16" height="16" viewBox="0 0 16 16" style="left:1515px;top:877px"><circle cx="8" cy="8" r="6" fill="#3a4a58" stroke="#b8c8d8"/><circle cx="8" cy="8" r="2" fill="#d0d8e0"/></svg>
<svg width="12" height="18" viewBox="0 0 12 18" style="left:1535px;top:877px"><path d="M6 0 10 8 7 8 7 17 5 17 5 8 2 8Z" fill="#d8302c"/></svg>
<div class="t" style="left:1557px;top:878px;color:#e8f2fc;font-size:13px;font-family:'Liberation Mono',monospace;letter-spacing:-.4px">10:56</div>

</body></html>
